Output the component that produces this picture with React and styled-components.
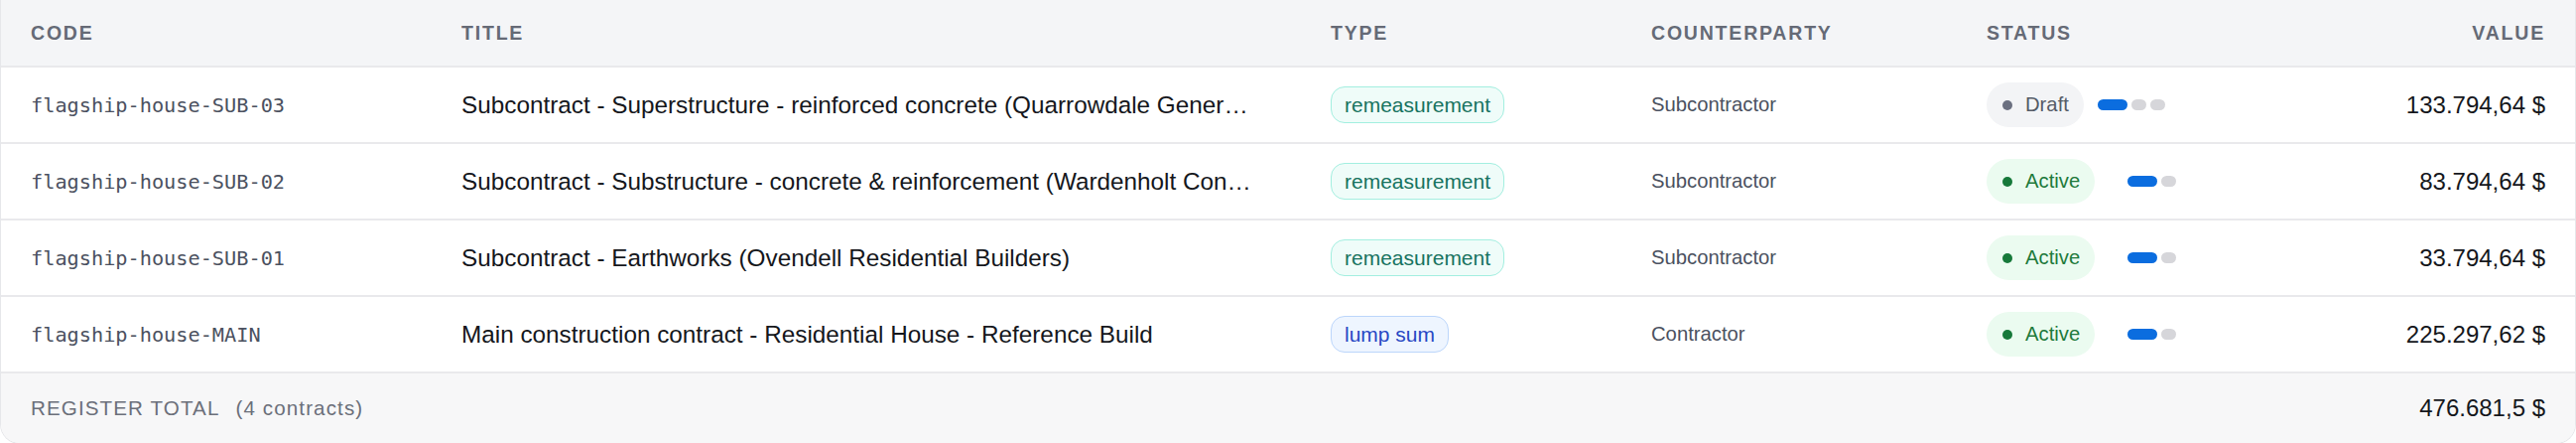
import React from 'react';
import styled, { createGlobalStyle } from 'styled-components';

const GlobalStyle = createGlobalStyle`
  *, *::before, *::after {
    box-sizing: border-box;
  }
  html, body {
    margin: 0;
    padding: 0;
    background: #ffffff;
  }
  body {
    font-family: "Liberation Sans", Arial, sans-serif;
  }
`;

const COLUMNS = '434px 876px 323px 338px 1fr 320px';

const Card = styled.div`
  width: 2596px;
  border: 1px solid #e6e7ea;
  border-top: none;
  border-radius: 0 0 20px 20px;
  overflow: hidden;
  background: #fff;
`;

const Row = styled.div`
  display: grid;
  grid-template-columns: ${COLUMNS};
  align-items: center;
  height: ${(p) => p.$height}px;
  background: ${(p) => p.$bg || '#fff'};
  border-bottom: ${(p) => (p.$last ? 'none' : '2px solid #e9e9ec')};
`;

const Cell = styled.div`
  padding: 0 30px;
  min-width: 0;
  display: flex;
  align-items: center;
  justify-content: ${(p) => (p.$right ? 'flex-end' : 'flex-start')};
`;

const HeadCell = styled(Cell)`
  font-size: 19.5px;
  font-weight: 700;
  letter-spacing: 1.8px;
  text-transform: uppercase;
  color: #656a76;
`;

const Code = styled.span`
  font-family: "DejaVu Sans Mono", "Liberation Mono", monospace;
  font-size: 20.25px;
  color: #4b5160;
`;

const Title = styled.span`
  display: block;
  max-width: 802px;
  font-size: 24.3px;
  color: #15171c;
  white-space: nowrap;
  overflow: hidden;
  text-overflow: ellipsis;
`;

const TypeBadge = styled.span`
  display: inline-block;
  font-size: 21px;
  line-height: 25px;
  padding: 5px 13px;
  border-radius: 14px;
  border: 1.5px solid ${(p) => (p.$kind === 'lump sum' ? '#bcd6fb' : '#a3efe0')};
  background: ${(p) => (p.$kind === 'lump sum' ? '#eef5ff' : '#effcf9')};
  color: ${(p) => (p.$kind === 'lump sum' ? '#2748c4' : '#17735f')};
`;

const Party = styled.span`
  font-size: 20.25px;
  color: #4b5160;
`;

const StatusWrap = styled.div`
  display: flex;
  align-items: center;
  gap: 14px;
`;

const StatusPill = styled.span`
  display: inline-flex;
  align-items: center;
  gap: 13px;
  height: 45px;
  padding: 0 15px 0 16px;
  border-radius: 23px;
  font-size: 20.25px;
  background: ${(p) => (p.$status === 'Active' ? '#ebfbf0' : '#f3f4f6')};
  color: ${(p) => (p.$status === 'Active' ? '#1e7a3c' : '#555b67')};
`;

const Dot = styled.span`
  width: 10px;
  height: 10px;
  border-radius: 50%;
  background: ${(p) => (p.$status === 'Active' ? '#17793a' : '#6b7080')};
`;

const Steps = styled.div`
  display: flex;
  align-items: center;
  gap: 4px;
`;

const Step = styled.span`
  height: 10.5px;
  border-radius: 6px;
  width: ${(p) => (p.$state === 'current' ? 30 : 15)}px;
  background: ${(p) =>
    p.$state === 'current' ? '#0b6ddf' : p.$state === 'todo' ? '#d6d6da' : 'transparent'};
`;

const Value = styled.span`
  font-size: 24px;
  color: #15171c;
`;

const TotalLabel = styled.span`
  font-size: 20.6px;
  letter-spacing: 1.1px;
  color: #6b6f7a;
`;

const TotalCount = styled.span`
  margin-left: 16px;
`;

const STAGES = ['Draft', 'Active', 'Closed'];

const contracts = [
  {
    code: 'flagship-house-SUB-03',
    title: 'Subcontract - Superstructure - reinforced concrete (Quarrowdale General Contractors)',
    type: 'remeasurement',
    party: 'Subcontractor',
    status: 'Draft',
    value: '133.794,64 $',
  },
  {
    code: 'flagship-house-SUB-02',
    title: 'Subcontract - Substructure - concrete & reinforcement (Wardenholt Construction)',
    type: 'remeasurement',
    party: 'Subcontractor',
    status: 'Active',
    value: '83.794,64 $',
  },
  {
    code: 'flagship-house-SUB-01',
    title: 'Subcontract - Earthworks (Ovendell Residential Builders)',
    type: 'remeasurement',
    party: 'Subcontractor',
    status: 'Active',
    value: '33.794,64 $',
  },
  {
    code: 'flagship-house-MAIN',
    title: 'Main construction contract - Residential House - Reference Build',
    type: 'lump sum',
    party: 'Contractor',
    status: 'Active',
    value: '225.297,62 $',
  },
];

// passed steps keep their slot but are not painted
const StageSteps = ({ status }) => {
  const current = STAGES.indexOf(status);
  return (
    <Steps>
      {STAGES.map((s, i) => (
        <Step key={s} $state={i < current ? 'done' : i === current ? 'current' : 'todo'} />
      ))}
    </Steps>
  );
};

const App = () => (
  <>
    <GlobalStyle />
    <Card>
      <Row $height={68} $bg="#f4f5f7">
        <HeadCell>Code</HeadCell>
        <HeadCell>Title</HeadCell>
        <HeadCell>Type</HeadCell>
        <HeadCell>Counterparty</HeadCell>
        <HeadCell>Status</HeadCell>
        <HeadCell $right>Value</HeadCell>
      </Row>
      {contracts.map((c) => (
        <Row key={c.code} $height={77}>
          <Cell>
            <Code>{c.code}</Code>
          </Cell>
          <Cell>
            <Title>{c.title}</Title>
          </Cell>
          <Cell>
            <TypeBadge $kind={c.type}>{c.type}</TypeBadge>
          </Cell>
          <Cell>
            <Party>{c.party}</Party>
          </Cell>
          <Cell>
            <StatusWrap>
              <StatusPill $status={c.status}>
                <Dot $status={c.status} />
                {c.status}
              </StatusPill>
              <StageSteps status={c.status} />
            </StatusWrap>
          </Cell>
          <Cell $right>
            <Value>{c.value}</Value>
          </Cell>
        </Row>
      ))}
      <Row $height={70} $bg="#f7f7f8" $last>
        <Cell style={{ gridColumn: '1 / 3' }}>
          <TotalLabel>
            REGISTER TOTAL<TotalCount>(4 contracts)</TotalCount>
          </TotalLabel>
        </Cell>
        <Cell style={{ gridColumn: '6' }} $right>
          <Value>476.681,5 $</Value>
        </Cell>
      </Row>
    </Card>
  </>
);

export default App;
